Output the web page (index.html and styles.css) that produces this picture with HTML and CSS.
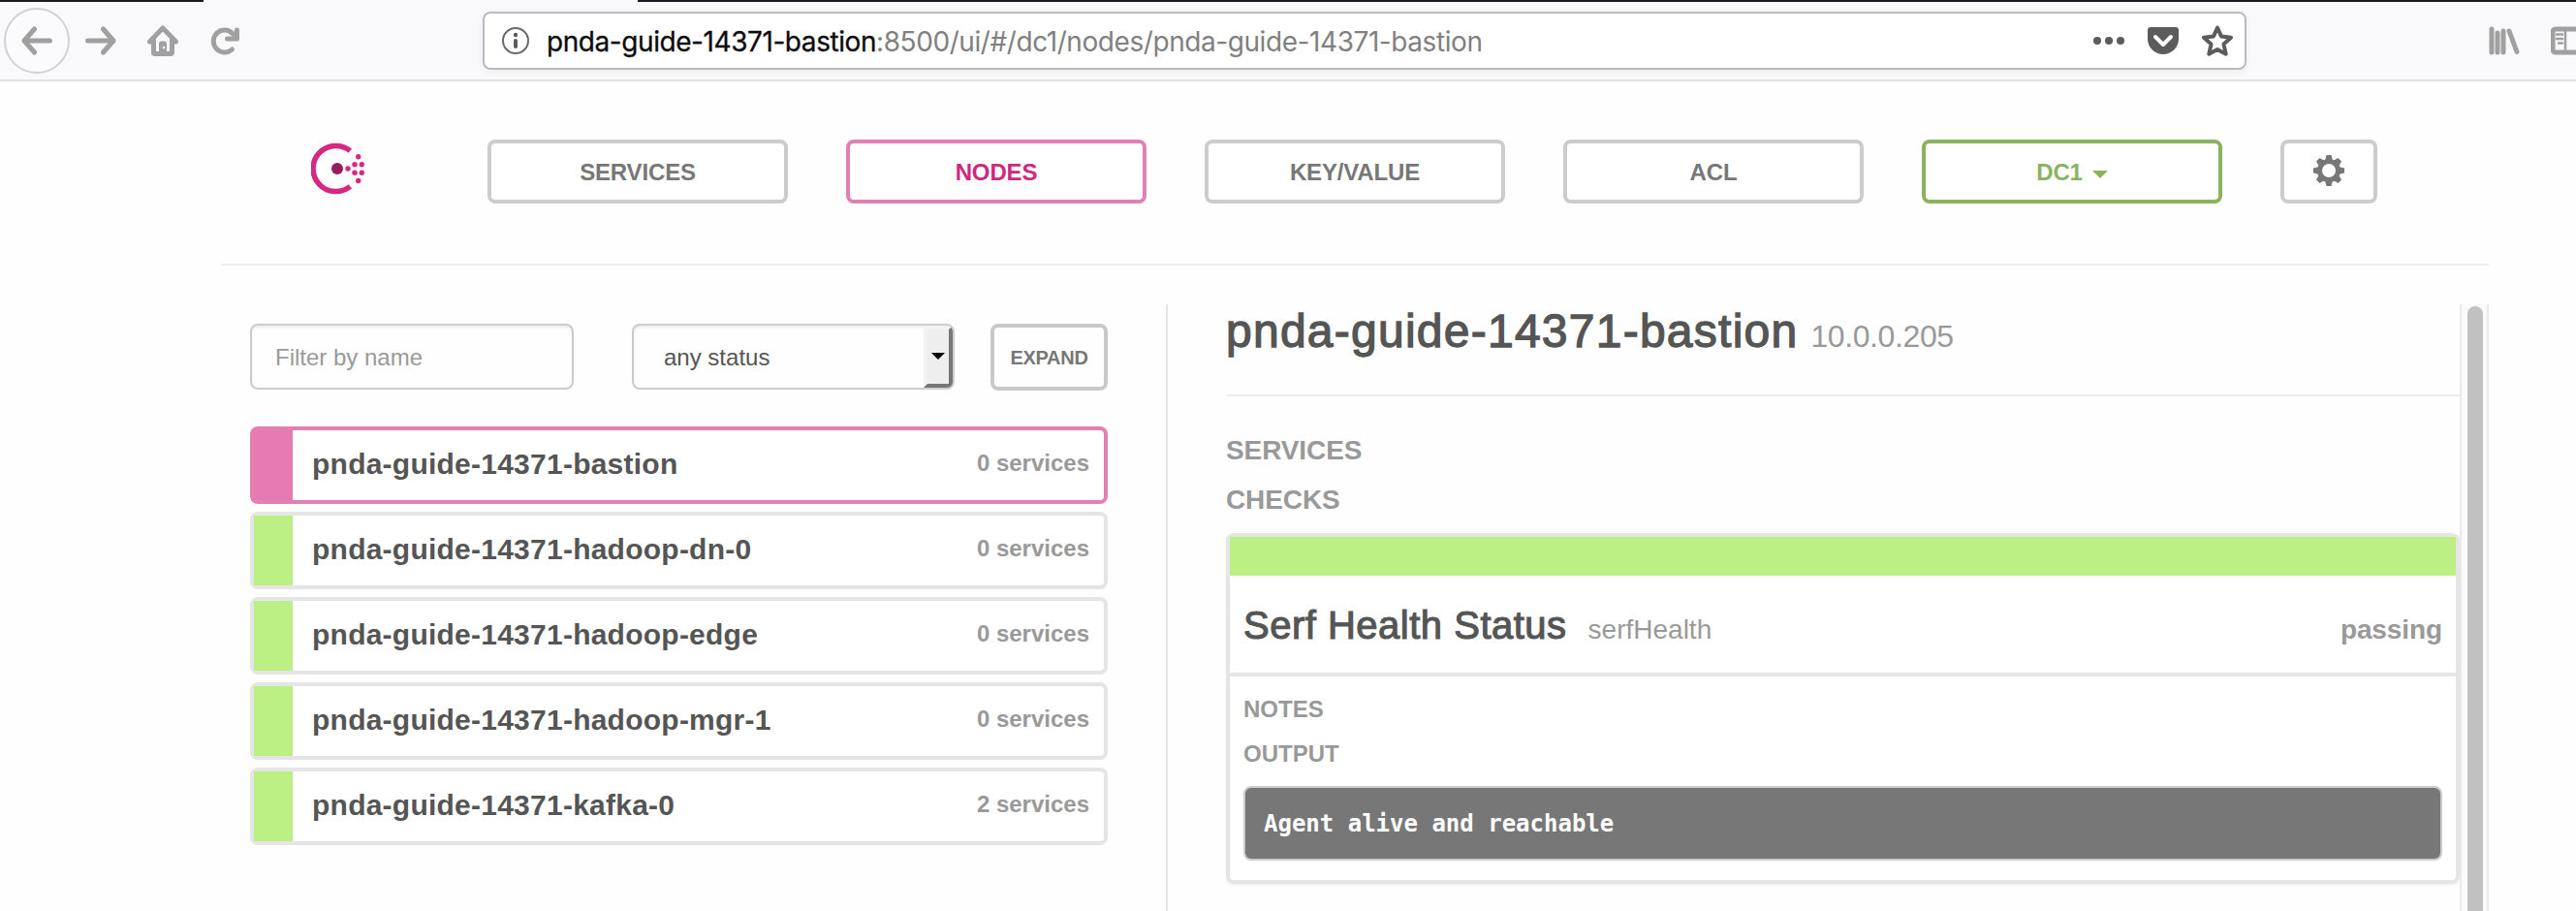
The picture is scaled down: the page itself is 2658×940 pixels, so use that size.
FILE: index.html
```html
<!DOCTYPE html>
<html lang="en">
<head>
<meta charset="utf-8">
<title>Consul</title>
<link rel="stylesheet" href="styles.css">
</head>
<body>
<div class="tabstrip"><span class="tab-active"></span></div>
<div class="toolbar">
  <div class="back">
    <svg width="32" height="32" viewBox="0 0 32 32" class="line"><path d="M29.500 16H3M13.500 4 3 16l10.500 12"/></svg>
  </div>
  <svg width="32" height="32" viewBox="0 0 32 32" class="line forward"><path d="M2.500 16H29M18.500 4 29 16 18.500 28"/></svg>
  <svg width="32" height="32" viewBox="0 0 32 32" class="line home"><path d="M2.500 17 16 3l13.500 14M6.500 15v13q0 1.500 1.500 1.500h16q1.500 0 1.500-1.500V15"/><path class="solid" d="M12 30V19q0-2.500 2.500-2.500h3q2.500 0 2.500 2.500v11z"/><circle cx="17" cy="23" r="1.300" class="dot"/></svg>
  <svg width="32" height="32" viewBox="0 0 32 32" class="line reload"><path d="M24.500 9A11.500 11.500 0 1 0 23.500 25M28.500 5v9H18.500"/></svg>
  <div class="urlbar">
    <svg width="28" height="28" viewBox="0 0 28 28"><circle cx="14" cy="14" r="13" fill="none" stroke="#6a6a6a" stroke-width="2"/><circle cx="14" cy="8" r="2.200" fill="#5c5c5c"/><path d="M14 14v6" stroke="#5c5c5c" stroke-width="4" stroke-linecap="round"/></svg>
    <div class="url"><span class="host">pnda-guide-14371-bastion</span>:8500/ui/#/dc1/nodes/pnda-guide-14371-bastion</div>
    <svg width="32" height="32" viewBox="0 0 32 32" class="fill"><circle cx="4" cy="16" r="4"/><circle cx="16" cy="16" r="4"/><circle cx="28" cy="16" r="4"/></svg>
    <svg width="32" height="32" viewBox="0 0 32 32" class="fill pocket"><path d="M3 2h26q3 0 3 3v9a16 16 0 0 1-32 0V5q0-3 3-3z"/><path d="m8 12 8 8 8-8" fill="none" stroke="#fff" stroke-width="4" stroke-linecap="round" stroke-linejoin="round"/></svg>
    <svg width="32" height="32" viewBox="0 0 32 32" class="star"><path d="m16 2.500 4 9 10 1.200-7.500 6.800 2.200 10.200L16 25l-8.700 4.700 2.200-10.200L2 12.700l10-1.200z" fill="none" stroke="#5c5c5c" stroke-width="4" stroke-linejoin="round"/></svg>
  </div>
  <svg width="32" height="32" viewBox="0 0 32 32" class="line library"><path d="M3 4v24M9 8v20M15 6v22M21 6l8 21.500"/></svg>
  <svg width="34" height="32" viewBox="0 0 34 32" class="line sidebar"><rect x="2" y="4" width="30" height="24" rx="3"/><path class="thin" d="M15 4v24M6 9.500h6M6 14h6M8 18.500h4"/></svg>
</div>

<div class="container">
  <div class="nav">
    <svg class="logo" width="56" height="56" viewBox="0 0 56 56"><path d="M40.300 8.700A23.500 23.500 0 1 0 40.300 45.300" fill="none" stroke="#d62783" stroke-width="5.500"/><circle cx="27" cy="27" r="6" fill="#961d59"/><g fill="#d62783"><circle cx="38" cy="27" r="2.700"/><circle cx="45" cy="22.800" r="2.700"/><circle cx="52.300" cy="22.800" r="2.700"/><circle cx="45" cy="31.300" r="2.700"/><circle cx="52.300" cy="31.300" r="2.700"/><circle cx="48.700" cy="14.800" r="2.700"/><circle cx="48.700" cy="39.500" r="2.700"/></g></svg>
    <a class="btn">SERVICES</a>
    <a class="btn active">NODES</a>
    <a class="btn">KEY/VALUE</a>
    <a class="btn">ACL</a>
    <a class="btn dc">DC1<span class="caret"></span></a>
    <a class="btn gear"><svg width="32" height="32" viewBox="-16 -16 32 32"><g fill="#777"><path d="M-2.500-16h5l1.500 6h-8z"/><path d="M-2.500-16h5l1.500 6h-8z" transform="rotate(45)"/><path d="M-2.500-16h5l1.500 6h-8z" transform="rotate(90)"/><path d="M-2.500-16h5l1.500 6h-8z" transform="rotate(135)"/><path d="M-2.500-16h5l1.500 6h-8z" transform="rotate(180)"/><path d="M-2.500-16h5l1.500 6h-8z" transform="rotate(225)"/><path d="M-2.500-16h5l1.500 6h-8z" transform="rotate(270)"/><path d="M-2.500-16h5l1.500 6h-8z" transform="rotate(315)"/></g><circle r="9.500" fill="none" stroke="#777" stroke-width="5"/></svg></a>
  </div>

  <div class="main">
    <div class="nodes">
      <div class="filters">
        <div class="field">Filter by name</div>
        <div class="field select"><span>any status</span><i class="drop"></i></div>
        <div class="expand">EXPAND</div>
      </div>
      <div class="node selected"><b>pnda-guide-14371-bastion</b><span>0 services</span></div>
      <div class="node"><b>pnda-guide-14371-hadoop-dn-0</b><span>0 services</span></div>
      <div class="node"><b>pnda-guide-14371-hadoop-edge</b><span>0 services</span></div>
      <div class="node"><b>pnda-guide-14371-hadoop-mgr-1</b><span>0 services</span></div>
      <div class="node"><b>pnda-guide-14371-kafka-0</b><span>2 services</span></div>
    </div>
    <div class="detail">
      <div class="title"><h2>pnda-guide-14371-bastion</h2><span class="ip">10.0.0.205</span></div>
      <h4>SERVICES</h4>
      <h4>CHECKS</h4>
      <div class="card">
        <div class="bar"></div>
        <div class="card-head"><h3>Serf Health Status</h3><span class="id">serfHealth</span><span class="state">passing</span></div>
        <div class="card-body">
          <h5>NOTES</h5>
          <h5>OUTPUT</h5>
          <pre>Agent alive and reachable</pre>
        </div>
      </div>
    </div>
    <div class="scrollbar"><div class="thumb"></div></div>
  </div>
</div>
</body>
</html>
```
FILE: styles.css
```css
* { box-sizing: border-box; }
body {
  margin: 0; width: 2658px; height: 940px; overflow: hidden;
  background: #fefefe; color: #555;
  font-family: "Liberation Sans", Arial, sans-serif;
}
h2, h3, h4, h5, pre { margin: 0; }
svg { display: block; flex: none; }

.tabstrip { height: 2px; background: #1d1b20; padding-left: 210px; }
.tab-active { display: block; width: 448px; height: 2px; background: #f9f9fb; }
.toolbar {
  height: 82px; display: flex; align-items: center; overflow: hidden;
  background: #f9f9fb; border-bottom: 2px solid #e1e1e2; padding-left: 4px;
}
.back {
  width: 68px; height: 68px; flex: none; border: 2px solid #d2d2d3; border-radius: 50%;
  background: #fbfbfd; display: flex; align-items: center; justify-content: center;
}
.line { fill: none; stroke: #a0a0a0; stroke-width: 5; stroke-linecap: round; stroke-linejoin: round; }
.line .solid { fill: #a0a0a0; stroke: none; }
.line .dot { fill: #f9f9fb; stroke: none; }
.line .thin { stroke-width: 2.5; }
.forward { margin-left: 16px; }
.home { margin-left: 32px; }
.reload { margin-left: 32px; }
.urlbar {
  margin-left: 250px; width: 1820px; height: 60px; flex: none;
  border: 2px solid #bbbbbd; border-radius: 8px; background: #fff;
  box-shadow: 0 2px 8px rgba(0,0,0,.05);
  display: flex; align-items: center; padding: 0 12px 0 18px;
}
.url {
  flex: 1; margin-left: 18px; padding-top: 2px; white-space: nowrap; color: #808080;
  font: 28px/56px Inter, sans-serif; letter-spacing: -.43px;
}
.host { color: #0c0c0d; -webkit-text-stroke: .3px #0c0c0d; }
.fill { fill: #5c5c5c; }
.pocket { margin-left: 24px; }
.star { margin-left: 24px; }
.library { margin-left: 250px; }
.sidebar { margin-left: 32px; }

.container { width: 2340px; margin-left: 228px; }
.nav {
  height: 190px; padding: 60px 0 0 93px; display: flex; align-items: flex-start;
  border-bottom: 2px solid #eee;
}
.logo { margin: 3px 126px 0 0; }
.btn {
  width: 310px; height: 66px; margin-right: 60px; flex: none; padding-top: 1px;
  border: 4px solid #ccc; border-radius: 8px; background: #fff;
  display: flex; align-items: center; justify-content: center;
  color: #777; font-size: 24px; font-weight: bold; letter-spacing: -.15px;
}
.active { border-color: #e27fb3; color: #d0287c; }
.dc { border-color: #89b35e; color: #89b35e; }
.caret {
  margin: 5px 0 0 10px; border: 8px solid transparent;
  border-top-color: currentColor; border-bottom: 0;
}
.gear { width: 100px; margin: 0; padding: 0 0 2px; }

.main { display: flex; margin-top: 40px; height: 626px; }
.nodes { width: 977px; padding: 20px 60px 0 30px; border-right: 2px solid #e5e5e5; }
.filters { display: flex; height: 106px; font-size: 24px; }
.field {
  width: 334px; height: 68px; border: 2px solid #ccc; border-radius: 8px;
  padding-left: 24px; line-height: 65px; color: #999;
  box-shadow: inset 0 2px 3px rgba(0,0,0,.075);
}
.select {
  width: 333px; margin-left: 60px; padding-left: 31px; color: #555;
  display: flex; justify-content: space-between; overflow: hidden;
}
.drop {
  width: 30px; height: 64px; background: #eee; border: 4px solid;
  border-color: #f2f2f2 #777 #777 #f2f2f2; display: flex; justify-content: center; padding-top: 24px;
}
.drop::before { content: ""; height: 0; border: 7px solid transparent; border-top-color: #000; border-bottom: 0; }
.expand {
  width: 121px; height: 69px; margin-left: 37px; border: 4px solid #c9c9c9; border-radius: 8px;
  text-align: center; line-height: 62px; font-size: 20px; font-weight: bold;
  color: #777; letter-spacing: -.3px;
}
.node {
  height: 80px; margin-bottom: 8px; border: 4px solid #e5e5e5; border-radius: 8px;
  padding: 0 15px 0 20px; display: flex; align-items: center; background: #fff;
}
.node::before {
  content: ""; width: 40px; height: 72px; margin: 0 20px 0 -20px; background: #bcf085;
}
.node b { flex: 1; font-size: 30px; line-height: 68px; letter-spacing: .24px; height: 72px; padding-top: 1px; font-kerning: none; }
.node span { font-size: 24px; font-weight: bold; color: #999; padding-bottom: 4px; }
.selected { border-color: #e27fb3; }
.selected::before { background: #e77ab2; }

.detail { width: 1333px; padding-left: 60px; }
.title {
  height: 95px; border-bottom: 2px solid #eee; padding-top: 1px;
  display: flex; align-items: baseline;
}
.title h2 {
  font-size: 48px; line-height: 54px; font-weight: normal;
  letter-spacing: 1.25px; -webkit-text-stroke: 1.3px #555;
}
.ip { font-size: 32px; color: #999; margin-left: 13px; letter-spacing: -.4px; }
h4 { font-size: 28px; line-height: 32px; color: #999; letter-spacing: -.1px; }
.title + h4 { margin-top: 40px; }
h4 + h4 { margin-top: 19px; }
.card {
  margin-top: 18px; height: 362px; border: 4px solid #e5e5e5; border-radius: 8px;
  background: #fff; box-shadow: 0 2px 3px rgba(0,0,0,.05);
}
.bar { height: 40px; background: #bcf085; }
.card-head {
  height: 104px; border-bottom: 4px solid #e5e5e5; padding: 29px 14px 0;
  display: flex; align-items: baseline;
}
.card-head h3 {
  font-size: 40px; line-height: 44px; font-weight: normal;
  letter-spacing: .5px; -webkit-text-stroke: 1.1px #555;
}
.id { font-size: 28px; color: #999; margin-left: 22px; }
.state { font-size: 28px; font-weight: bold; color: #999; margin-left: auto; letter-spacing: -.1px; }
.card-body { padding: 20px 14px; }
h5 { font-size: 24px; line-height: 28px; color: #999; letter-spacing: 0; }
h5 + h5 { margin-top: 18px; }
pre {
  margin-top: 19px; height: 77px; border: 2px solid #ccc; border-radius: 8px;
  background: #777; color: #fff; padding-left: 19px;
  font: bold 24px/75px "DejaVu Sans Mono", monospace;
}
.scrollbar {
  width: 30px; border: solid #e9e9e9; border-width: 0 2px; background: #fafafa;
  padding: 2px 4px 0 6px; overflow: hidden;
}
.thumb { width: 16px; height: 660px; border-radius: 8px; background: #c1c1c1; }
```
